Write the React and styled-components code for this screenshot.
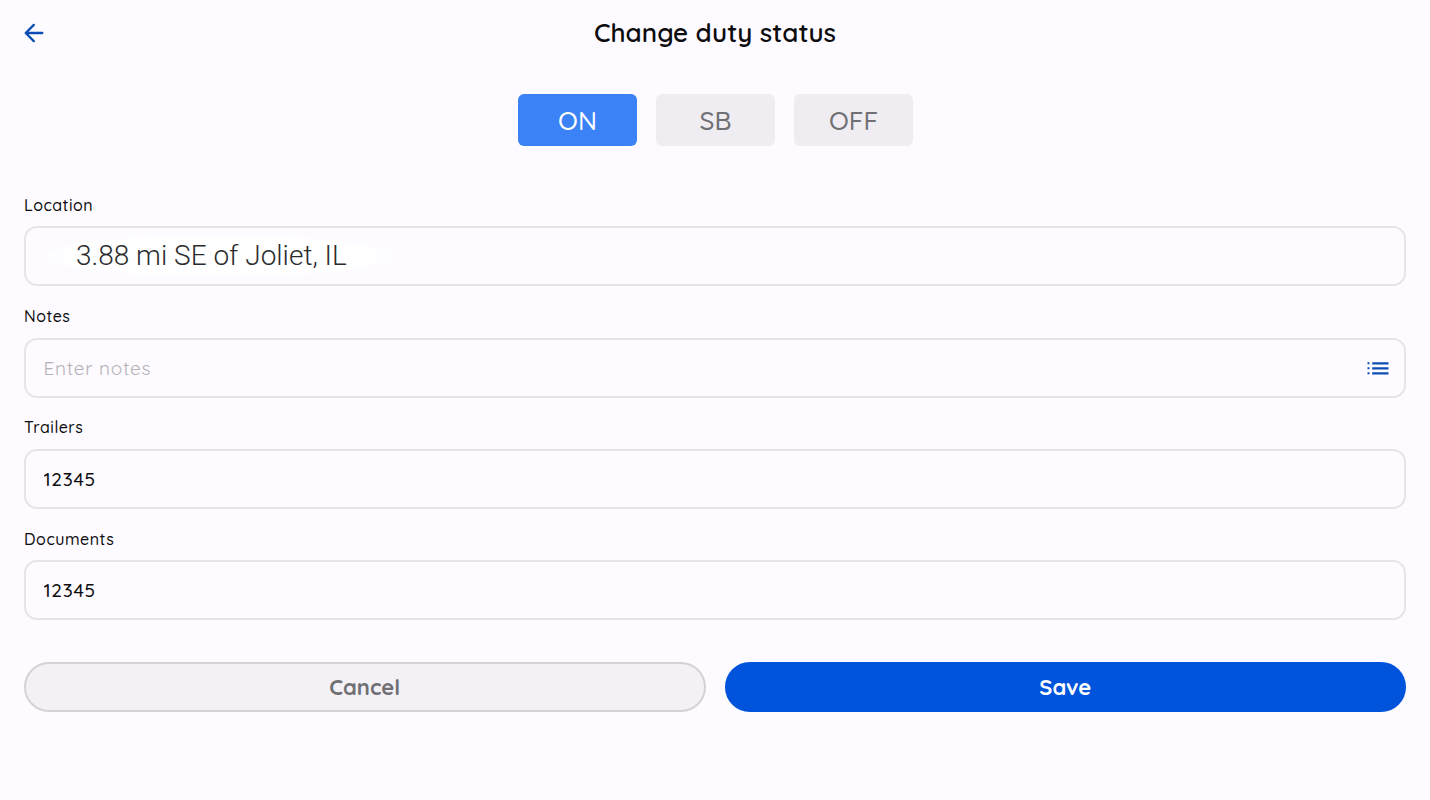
import { useState } from "react";
import styled, { createGlobalStyle } from "styled-components";

const GlobalStyle = createGlobalStyle`
  * {
    box-sizing: border-box;
  }

  body {
    margin: 0;
    background-color: #fdfbff;
    color: #0c0c0e;
    font-family: Quicksand, Lato, "Open Sans", sans-serif;
  }

  button,
  input {
    font-family: inherit;
  }
`;

const Page = styled.div`
  display: flex;
  flex-direction: column;
  min-height: 800px;
  padding: 0 24px;
`;

const Header = styled.header`
  display: grid;
  grid-template-columns: 24px 1fr 24px;
  align-items: center;
  height: 65px;

  h1 {
    margin: 0;
    text-align: center;
    font-size: 26px;
    font-weight: 600;
    line-height: 32px;
    letter-spacing: 0.03px;
  }
`;

const IconButton = styled.button`
  display: flex;
  padding: 0;
  border: none;
  background: none;
  color: #0b4db3;
  cursor: pointer;
`;

const StatusTabs = styled.div`
  display: flex;
  justify-content: center;
  gap: 19px;
  margin-top: 29px;
`;

const StatusTab = styled.button`
  width: 119px;
  height: 52px;
  padding: 1px 0 0 1px;
  border: none;
  border-radius: 6px;
  background-color: ${({ $active }) => ($active ? "#3b82f6" : "#efedf2")};
  color: ${({ $active }) => ($active ? "#ffffff" : "#707074")};
  font-size: 26px;
  font-weight: 500;
  cursor: pointer;
`;

const Form = styled.form`
  display: flex;
  flex-direction: column;
  margin-top: 49px;
`;

const FieldGroup = styled.div`
  display: flex;
  flex-direction: column;
  height: 111.2px;

  label {
    height: 31.4px;
    line-height: 20px;
    font-size: 16px;
    font-weight: 500;
    letter-spacing: 0.5px;
  }
`;

const FieldBox = styled.div`
  display: flex;
  align-items: center;
  height: 60px;
  padding: 0 15px 0 17.5px;
  border: 2px solid #e6e4e8;
  border-radius: 13px;
`;

const Input = styled.input`
  flex: 1;
  min-width: 0;
  padding: 0;
  border: none;
  outline: none;
  background: none;
  color: #0c0c0e;
  font-size: 19px;
  font-weight: 500;
  letter-spacing: 0.7px;

  &::placeholder {
    color: #b4b2b7;
    font-weight: 400;
    opacity: 1;
  }
`;

const LocationInput = styled(Input)`
  flex: 0 0 356px;
  height: 44px;
  margin-left: -2.5px;
  padding: 0 0 2px 35px;
  background: radial-gradient(
    closest-side,
    #ffffff 85%,
    rgba(255, 255, 255, 0)
  );
  color: #2c2c2e;
  font-family: Roboto, sans-serif;
  font-size: 28px;
  font-weight: 300;
  letter-spacing: 0;
`;

const Actions = styled.div`
  display: grid;
  grid-template-columns: 1fr 1fr;
  gap: 19px;
  margin-top: 22px;
`;

const ActionButton = styled.button`
  height: 50px;
  border: 2px solid ${({ $primary }) => ($primary ? "#0053db" : "#d4d2d7")};
  border-radius: 25px;
  background-color: ${({ $primary }) => ($primary ? "#0053db" : "#f3f1f6")};
  color: ${({ $primary }) => ($primary ? "#ffffff" : "#707074")};
  font-size: 22px;
  font-weight: 700;
  cursor: pointer;
`;

const BackIcon = () => (
  <svg width="20" height="20" viewBox="0 0 20 20" fill="none">
    <path
      d="M18.3 10H1.8M9.8 1.9L1.7 10l8.1 8.1"
      stroke="currentColor"
      strokeWidth="2.3"
      strokeLinecap="round"
      strokeLinejoin="round"
    />
  </svg>
);

const ListIcon = () => (
  <svg width="22" height="14" viewBox="0 0 22 14" fill="currentColor">
    <path d="M0.5 1.2h2v2h-2zM5.2 1.2H21.5v2.2H5.2zM0.5 6.2h2v2h-2zM5.2 6.2H21.5v2.2H5.2zM0.5 11.2h2v2h-2zM5.2 11.2H21.5v2.2H5.2z" />
  </svg>
);

const statuses = ["ON", "SB", "OFF"];

const App = () => {
  const [status, setStatus] = useState("ON");

  return (
    <>
      <GlobalStyle />
      <Page>
        <Header>
          <IconButton type="button" aria-label="Back">
            <BackIcon />
          </IconButton>
          <h1>Change duty status</h1>
        </Header>

        <StatusTabs>
          {statuses.map((item) => (
            <StatusTab
              key={item}
              type="button"
              $active={item === status}
              onClick={() => setStatus(item)}
            >
              {item}
            </StatusTab>
          ))}
        </StatusTabs>

        <Form onSubmit={(e) => e.preventDefault()}>
          <FieldGroup>
            <label htmlFor="location">Location</label>
            <FieldBox>
              <LocationInput
                id="location"
                defaultValue="3.88 mi SE of Joliet, IL"
              />
            </FieldBox>
          </FieldGroup>

          <FieldGroup>
            <label htmlFor="notes">Notes</label>
            <FieldBox>
              <Input id="notes" placeholder="Enter notes" />
              <IconButton type="button" aria-label="Choose note">
                <ListIcon />
              </IconButton>
            </FieldBox>
          </FieldGroup>

          <FieldGroup>
            <label htmlFor="trailers">Trailers</label>
            <FieldBox>
              <Input id="trailers" defaultValue="12345" />
            </FieldBox>
          </FieldGroup>

          <FieldGroup>
            <label htmlFor="documents">Documents</label>
            <FieldBox>
              <Input id="documents" defaultValue="12345" />
            </FieldBox>
          </FieldGroup>

          <Actions>
            <ActionButton type="button">Cancel</ActionButton>
            <ActionButton type="submit" $primary>
              Save
            </ActionButton>
          </Actions>
        </Form>
      </Page>
    </>
  );
};

export default App;
